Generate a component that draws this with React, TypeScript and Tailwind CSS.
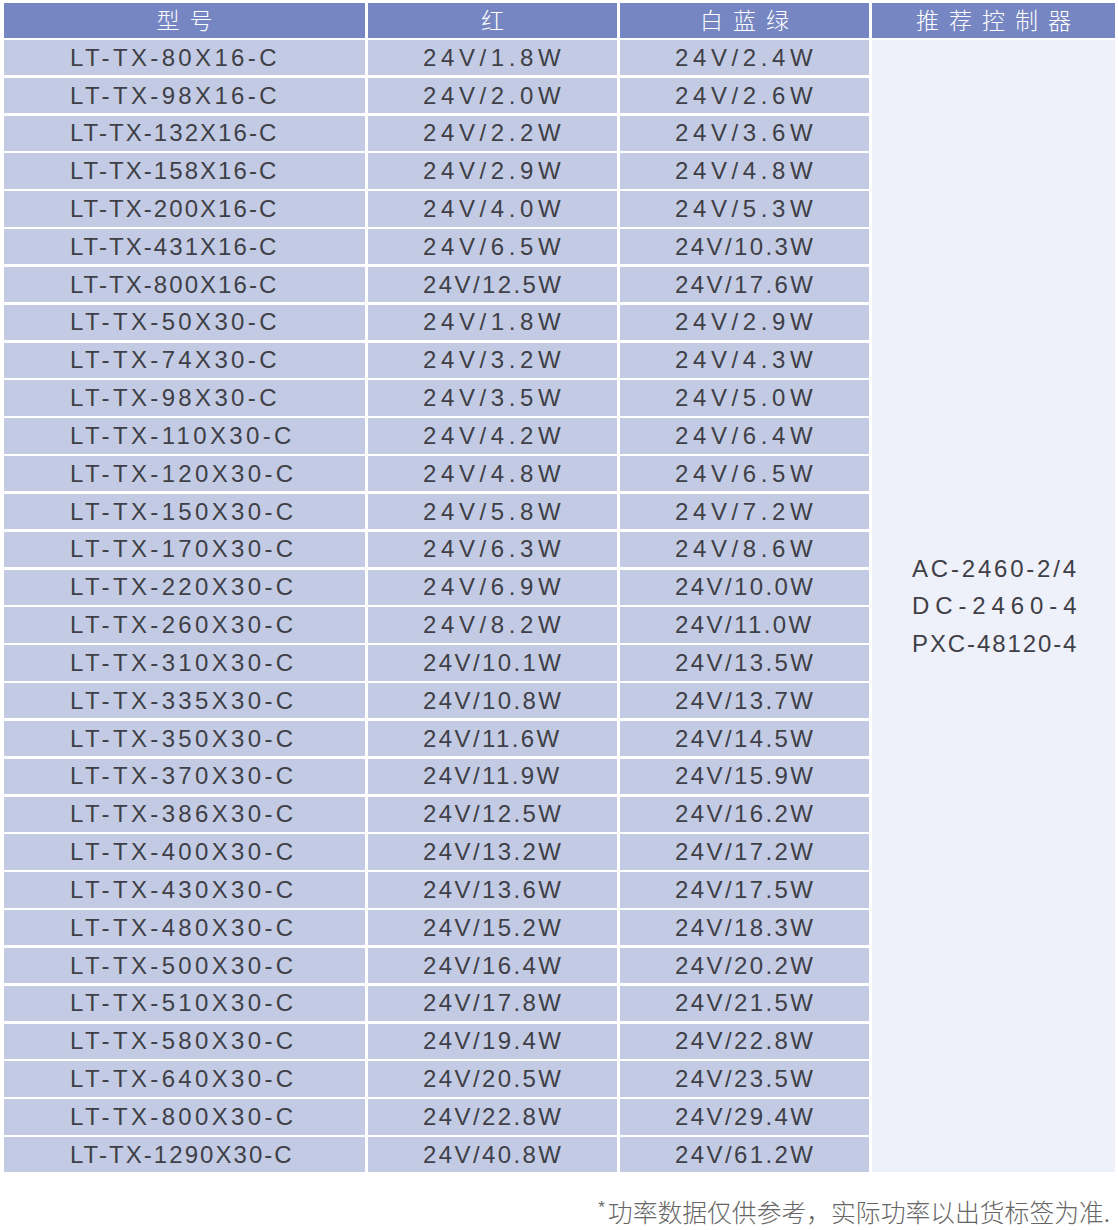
const rows: [string, string, string][] = [
  ['LT-TX-80X16-C', '24V/1.8W', '24V/2.4W'],
  ['LT-TX-98X16-C', '24V/2.0W', '24V/2.6W'],
  ['LT-TX-132X16-C', '24V/2.2W', '24V/3.6W'],
  ['LT-TX-158X16-C', '24V/2.9W', '24V/4.8W'],
  ['LT-TX-200X16-C', '24V/4.0W', '24V/5.3W'],
  ['LT-TX-431X16-C', '24V/6.5W', '24V/10.3W'],
  ['LT-TX-800X16-C', '24V/12.5W', '24V/17.6W'],
  ['LT-TX-50X30-C', '24V/1.8W', '24V/2.9W'],
  ['LT-TX-74X30-C', '24V/3.2W', '24V/4.3W'],
  ['LT-TX-98X30-C', '24V/3.5W', '24V/5.0W'],
  ['LT-TX-110X30-C', '24V/4.2W', '24V/6.4W'],
  ['LT-TX-120X30-C', '24V/4.8W', '24V/6.5W'],
  ['LT-TX-150X30-C', '24V/5.8W', '24V/7.2W'],
  ['LT-TX-170X30-C', '24V/6.3W', '24V/8.6W'],
  ['LT-TX-220X30-C', '24V/6.9W', '24V/10.0W'],
  ['LT-TX-260X30-C', '24V/8.2W', '24V/11.0W'],
  ['LT-TX-310X30-C', '24V/10.1W', '24V/13.5W'],
  ['LT-TX-335X30-C', '24V/10.8W', '24V/13.7W'],
  ['LT-TX-350X30-C', '24V/11.6W', '24V/14.5W'],
  ['LT-TX-370X30-C', '24V/11.9W', '24V/15.9W'],
  ['LT-TX-386X30-C', '24V/12.5W', '24V/16.2W'],
  ['LT-TX-400X30-C', '24V/13.2W', '24V/17.2W'],
  ['LT-TX-430X30-C', '24V/13.6W', '24V/17.5W'],
  ['LT-TX-480X30-C', '24V/15.2W', '24V/18.3W'],
  ['LT-TX-500X30-C', '24V/16.4W', '24V/20.2W'],
  ['LT-TX-510X30-C', '24V/17.8W', '24V/21.5W'],
  ['LT-TX-580X30-C', '24V/19.4W', '24V/22.8W'],
  ['LT-TX-640X30-C', '24V/20.5W', '24V/23.5W'],
  ['LT-TX-800X30-C', '24V/22.8W', '24V/29.4W'],
  ['LT-TX-1290X30-C', '24V/40.8W', '24V/61.2W'],
]

const modelTracking = (m: string) => {
  if (m.length === 15) return 'tracking-[2.05px]'
  if (m.length === 14 && m.includes('X16')) return 'tracking-[2.05px]'
  return 'tracking-[3.35px]'
}

const powerTracking = (p: string) => (p.length === 8 ? 'tracking-[4.6px]' : 'tracking-[2.4px]')

const latin = "font-['Liberation_Sans',Arial,sans-serif]"
const cjk = "font-['Noto_Sans_CJK_SC',sans-serif]"
const head = `bg-[#7686c2] flex items-center justify-center pb-[2px] text-white text-[23px] font-light pl-[10px] tracking-[10px] ${cjk}`
const cell = `bg-[#c3cbe4] flex items-center text-[24px] text-[#3f3f47] whitespace-nowrap ${latin}`

export default function App() {
  return (
    <div className="w-[1118px] h-[1230px] bg-white overflow-hidden">
      <div className="pl-[4px] pt-[3px]">
        <div className="grid grid-cols-[361px_249px_249px_243px] grid-rows-[34.5px_repeat(30,35.34px)] gap-x-[3px] gap-y-[2.5px]">
          {/* header */}
          <div className={head}>型号</div>
          <div className={head}>红</div>
          <div className={head}>白蓝绿</div>
          <div className={head}>推荐控制器</div>

          {rows.map(([model, red, rgb], i) => (
            <>
              <div key={`m${i}`} className={`${cell} pl-[66px] ${modelTracking(model)}`}>
                {model}
              </div>
              <div key={`r${i}`} className={`${cell} pl-[55px] ${powerTracking(red)}`}>
                {red}
              </div>
              <div key={`g${i}`} className={`${cell} pl-[55px] ${powerTracking(rgb)}`}>
                {rgb}
              </div>
              {i === 0 && (
                <div key="ctrl" className={`row-span-30 bg-[#eef0fa] flex flex-col justify-center pl-[40px] text-[24px] leading-[37.5px] text-[#3f3f47] whitespace-nowrap ${latin}`}>
                  <span className="tracking-[2.8px]">AC-2460-2/4</span>
                  <span className="tracking-[5.9px]">DC-2460-4</span>
                  <span className="tracking-[1.9px]">PXC-48120-4</span>
                </div>
              )}
            </>
          ))}
        </div>
      </div>

      {/* footnote */}
      <div className={`flex justify-end items-start pr-[8px] mt-[25px] text-[24.8px] leading-[28px] font-light text-[#666666] ${cjk}`}>
        <span className={`text-[17px] leading-[17px] mt-[2px] mr-[3px] ${latin}`}>*</span>
        <span>功率数据仅供参考，实际功率以出货标签为准.</span>
      </div>
    </div>
  )
}
